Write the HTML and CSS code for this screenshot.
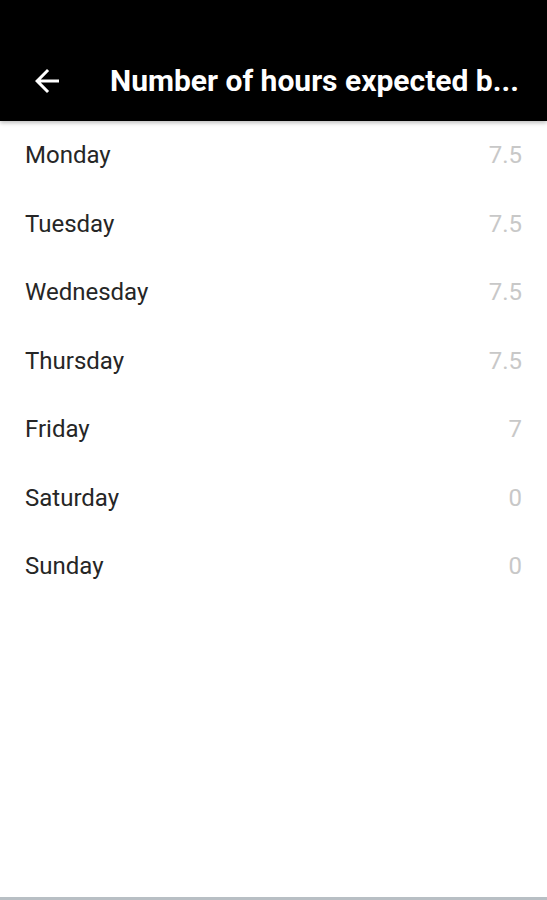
FILE: index.html
```html
<!DOCTYPE html>
<html lang="en">
<head>
    <meta charset="UTF-8">
    <title>Number of hours expected by day</title>
    <link rel="stylesheet" href="styles.css">
</head>
<body>
    <header class="toolbar">
        <button class="back-btn" aria-label="Back">
            <svg width="36" height="36" viewBox="0 0 24 24">
                <path d="M20 11H7.83l5.59-5.59L12 4l-8 8 8 8 1.41-1.41L7.83 13H20v-2z" fill="#fff"/>
            </svg>
        </button>
        <h1 class="title">Number of hours expected b...</h1>
    </header>

    <ul class="days">
        <li class="day"><span class="name">Monday</span><span class="hours">7.5</span></li>
        <li class="day"><span class="name">Tuesday</span><span class="hours">7.5</span></li>
        <li class="day"><span class="name">Wednesday</span><span class="hours">7.5</span></li>
        <li class="day"><span class="name">Thursday</span><span class="hours">7.5</span></li>
        <li class="day"><span class="name">Friday</span><span class="hours">7</span></li>
        <li class="day"><span class="name">Saturday</span><span class="hours">0</span></li>
        <li class="day"><span class="name">Sunday</span><span class="hours">0</span></li>
    </ul>

    <div class="bottom-bar"></div>
</body>
</html>
```

FILE: styles.css
```css
html, body {
    height: 100%;
}
body {
    margin: 0;
    font-family: Roboto, "Liberation Sans", sans-serif;
    background-color: #fff;
    color: #262626;
    display: flex;
    flex-direction: column;
}
.toolbar {
    height: 81px;
    padding: 40px 20px 0 29px;
    background-color: #000;
    display: flex;
    align-items: center;
    box-shadow: 0 2px 4px rgba(0, 0, 0, 0.25);
    flex-shrink: 0;
}
.back-btn {
    background: none;
    border: none;
    padding: 0;
    margin: 0 45px 0 0;
    display: flex;
    cursor: pointer;
}
.title {
    margin: 0;
    color: #fff;
    font-size: 30px;
    font-weight: 700;
    white-space: nowrap;
}
.days {
    list-style: none;
    margin: 0;
    padding: 0;
    flex: 1;
}
.day {
    height: 68.5px;
    display: flex;
    align-items: center;
    justify-content: space-between;
    padding: 0 25px;
    font-size: 24px;
}
.hours {
    color: #c8c8c8;
}
.bottom-bar {
    height: 3px;
    background-color: #b8bfc4;
    flex-shrink: 0;
}
```
